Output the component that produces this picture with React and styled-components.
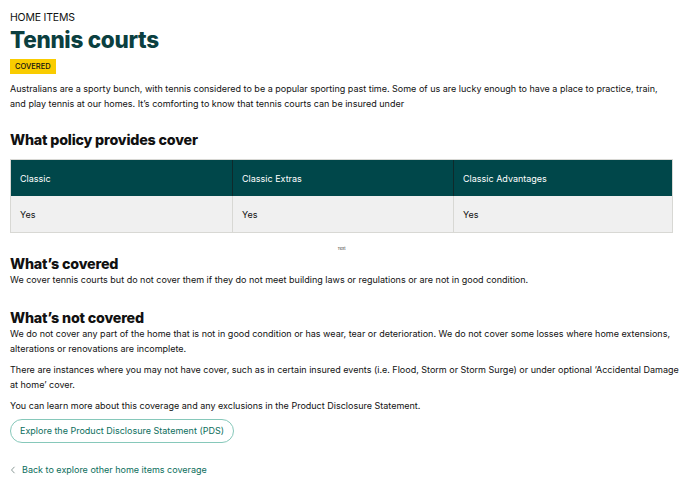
import React from "react";
import styled, { createGlobalStyle } from "styled-components";

const Global = createGlobalStyle`
  html, body { margin: 0; padding: 0; background: #fff; }
  body { font-family: "Inter", "Noto Sans", sans-serif; color: #111; }
`;

const Page = styled.main`
  padding: 11px 9px 14px 10px;
  display: flex;
  flex-direction: column;
`;

const Eyebrow = styled.div`
  font-size: 10.5px;
  line-height: 13px;
  letter-spacing: -0.2px;
  color: #111;
`;

const Title = styled.h1`
  margin: 3px 0 0;
  font-size: 22.5px;
  line-height: 26px;
  font-weight: 800;
  letter-spacing: -0.3px;
  color: #0b3f40;
`;

const Badge = styled.span`
  align-self: flex-start;
  margin-top: 6px;
  background: #f9cc00;
  color: #111;
  font-size: 7.5px;
  font-weight: 500;
  line-height: 8px;
  padding: 3.5px 5px;
`;

const Para = styled.p`
  margin: ${p => p.$mt || 0}px 0 0;
  max-width: ${p => p.$max || "none"};
  font-size: 9px;
  line-height: 15px;
  color: #111;
`;

const Heading = styled.h2`
  margin: ${p => p.$mt}px 0 0;
  font-size: 14.3px;
  line-height: 16px;
  font-weight: 800;
  letter-spacing: -0.2px;
  color: #111;
`;

const Table = styled.div`
  margin: 11px 8px 0 0;
  display: grid;
  grid-template-columns: 221px 221px 1fr;
  border: 1px solid #d8d8d4;
`;

const HeadCell = styled.div`
  background: #00474a;
  color: #fff;
  font-size: 9px;
  height: 36px;
  display: flex;
  align-items: center;
  padding-left: 9px;
  border-left: ${p => (p.$first ? "none" : "1px solid #0f2a2b")};
`;

const BodyCell = styled.div`
  background: #f0f0f0;
  color: #111;
  font-size: 9px;
  height: 36px;
  display: flex;
  align-items: center;
  padding-left: 9px;
  border-left: ${p => (p.$first ? "none" : "1px solid #d8d8d4")};
`;

const Tiny = styled.div`
  margin: 12.5px 8px 0 0;
  text-align: center;
  font-size: 4px;
  line-height: 5px;
  color: #333;
`;

const PdsButton = styled.a`
  align-self: flex-start;
  margin-top: 6px;
  border: 1px solid #86c8ba;
  border-radius: 13px;
  padding: 5px 9px;
  color: #0b6e5c;
  font-size: 9px;
  line-height: 12px;
  text-decoration: none;
`;

const BackLink = styled.a`
  margin-top: 21px;
  display: flex;
  align-items: center;
  gap: 6px;
  color: #0b6e5c;
  font-size: 9px;
  line-height: 12px;
  text-decoration: none;
`;

const cols = ["Classic", "Classic Extras", "Classic Advantages"];

export default function App() {
  return (
    <>
      <Global />
      <Page>
        <Eyebrow>HOME ITEMS</Eyebrow>
        <Title>Tennis courts</Title>
        <Badge>COVERED</Badge>
        <Para $mt={6.5} $max="660px">
          Australians are a sporty bunch, with tennis considered to be a popular sporting past time. Some of us are lucky enough to have a place to practice, train, and play tennis at our homes. It’s comforting to know that tennis courts can be insured under
        </Para>
        <Heading $mt={21.5}>What policy provides cover</Heading>
        <Table>
          {cols.map((c, i) => (
            <HeadCell key={c} $first={i === 0}>{c}</HeadCell>
          ))}
          {cols.map((c, i) => (
            <BodyCell key={c} $first={i === 0}>Yes</BodyCell>
          ))}
        </Table>
        <Tiny>Text</Tiny>
        <Heading $mt={5.5}>What’s covered</Heading>
        <Para>We cover tennis courts but do not cover them if they do not meet building laws or regulations or are not in good condition.</Para>
        <Heading $mt={23}>What’s not covered</Heading>
        <Para>
          We do not cover any part of the home that is not in good condition or has wear, tear or deterioration. We do not cover some losses where home extensions, alterations or renovations are incomplete.
        </Para>
        <Para $mt={6}>
          There are instances where you may not have cover, such as in certain insured events (i.e. Flood, Storm or Storm Surge) or under optional ‘Accidental Damage at home’ cover.
        </Para>
        <Para $mt={6}>You can learn more about this coverage and any exclusions in the Product Disclosure Statement.</Para>
        <PdsButton href="#">Explore the Product Disclosure Statement (PDS)</PdsButton>
        <BackLink href="#">
          <svg width="6" height="8" viewBox="0 0 6 8" fill="none">
            <path d="M4.5 0.8 L1.5 4 L4.5 7.2" stroke="#8a9a97" strokeWidth="1" />
          </svg>
          Back to explore other home items coverage
        </BackLink>
      </Page>
    </>
  );
}
